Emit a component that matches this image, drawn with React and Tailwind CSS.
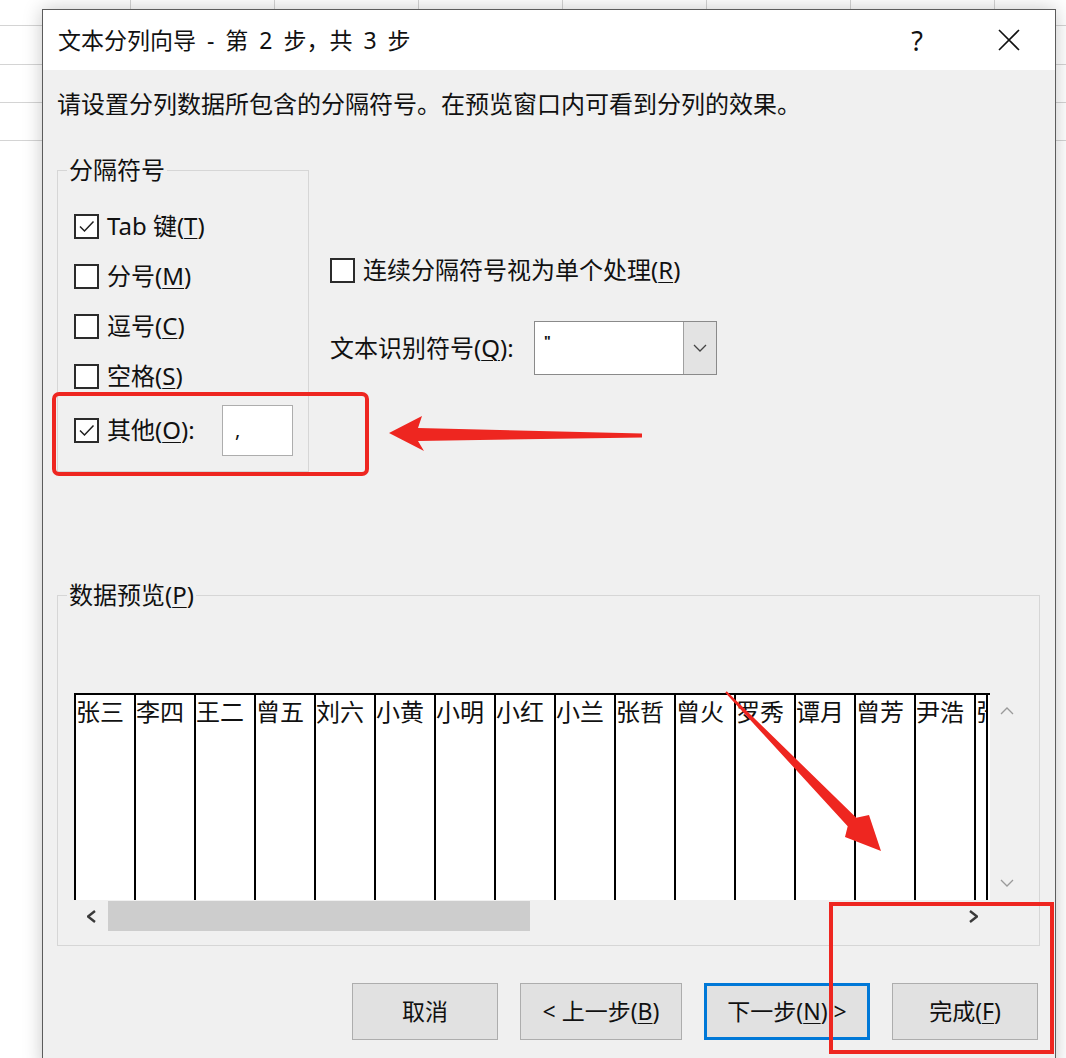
import React from "react";

const delimiters = [
  { label: "Tab 键", key: "T", checked: true },
  { label: "分号", key: "M" },
  { label: "逗号", key: "C" },
  { label: "空格", key: "S" },
];

const names = ["张三", "李四", "王二", "曾五", "刘六", "小黄", "小明", "小红", "小兰", "张哲", "曾火", "罗秀", "谭月", "曾芳", "尹浩"];

const Key = ({ k }) => (
  <>
    (<span className="underline underline-offset-[3px] decoration-1">{k}</span>)
  </>
);

const CheckBox = ({ checked }) => (
  <span className="w-[25px] h-[25px] border-2 border-[#2b2b2b] bg-white shrink-0 flex items-center justify-center">
    {checked && (
      <svg width="19" height="19" viewBox="0 0 19 19">
        <path d="M3 9.5 L7.5 14 L16.5 4.5" fill="none" stroke="#1f1f1f" strokeWidth="1.5" />
      </svg>
    )}
  </span>
);

const Chevron = ({ dir, className, color = "#444", width = 1.4, w = 14, h = 8 }) => {
  const paths = {
    down: `M1 1 L${w / 2} ${h - 1} L${w - 1} 1`,
    up: `M1 ${h - 1} L${w / 2} 1 L${w - 1} ${h - 1}`,
    left: `M${w - 1} 1 L1 ${h / 2} L${w - 1} ${h - 1}`,
    right: `M1 1 L${w - 1} ${h / 2} L1 ${h - 1}`,
  };
  return (
    <svg width={w} height={h} viewBox={`0 0 ${w} ${h}`} className={className}>
      <path d={paths[dir]} fill="none" stroke={color} strokeWidth={width} strokeLinejoin="miter" />
    </svg>
  );
};

const DialogButton = ({ children, primary, width }) => (
  <button
    className={`${width} h-[57px] flex items-center justify-center bg-[#e1e1e1] text-[23px] text-[#111] ${
      primary ? "border-[3px] border-[#0078d7]" : "border border-[#adadad]"
    }`}
  >
    {children}
  </button>
);

export default function App() {
  return (
    <div className="relative w-[1066px] h-[1058px] overflow-hidden bg-white bg-[linear-gradient(to_bottom,transparent_25.5px,#d4d4d4_25.5px,#d4d4d4_26.5px,transparent_26.5px,transparent_64.5px,#d4d4d4_64.5px,#d4d4d4_65.5px,transparent_65.5px,transparent_102.5px,#d4d4d4_102.5px,#d4d4d4_103.5px,transparent_103.5px,transparent_140.5px,#d4d4d4_140.5px,#d4d4d4_141.5px,transparent_141.5px),repeating-linear-gradient(to_right,transparent_0,transparent_130px,#d4d4d4_130px,#d4d4d4_131px,transparent_131px,transparent_144px)] pt-[9px] pl-[42px] font-['Noto_Sans','Noto_Sans_CJK_SC',sans-serif] text-[#111]">
      {/* Dialog window */}
      <div className="w-[1014px] h-[1060px] border border-[#5c5c5c] bg-[#f0f0f0] shadow-[0_0_18px_rgba(0,0,0,0.22)] flex flex-col">
        {/* Title bar */}
        <div className="h-[60px] bg-white flex items-center shrink-0">
          <div className="pl-[15px] text-[23px] leading-none flex-1 [word-spacing:5px]">文本分列向导 - 第 2 步，共 3 步</div>
          <div className="w-[92px] h-full flex items-center justify-center text-[27px] leading-none">?</div>
          <div className="w-[92px] h-full flex items-center justify-center">
            <svg width="22" height="22" viewBox="0 0 22 22">
              <path d="M1 1 L21 21 M21 1 L1 21" stroke="#111" strokeWidth="1.6" />
            </svg>
          </div>
        </div>

        {/* Body */}
        <div className="flex-1 pl-[14px] pr-[17px] pt-[18px]">
          <p className="text-[24px] leading-[32px]">请设置分列数据所包含的分隔符号。在预览窗口内可看到分列的效果。</p>

          {/* Upper row */}
          <div className="flex items-start mt-[36px]">
            <fieldset className="w-[252px] border border-[#d6d6d6]">
              <legend className="ml-[9px] px-[2px] text-[24px] leading-[28px]">分隔符号</legend>
              <div className="flex flex-col pl-[16px] pt-[17px] pb-[12px]">
                {delimiters.map((d) => (
                  <label key={d.key} className="h-[50px] flex items-center gap-[8px] text-[24px]">
                    <CheckBox checked={d.checked} />
                    <span>
                      {d.label}
                      <Key k={d.key} />
                    </span>
                  </label>
                ))}
                <div className="h-[58px] flex items-center text-[24px]">
                  <CheckBox checked />
                  <span className="w-[123px] pl-[8px]">
                    其他<Key k="O" />:
                  </span>
                  <div className="w-[71px] h-[51px] bg-white border border-[#adadad] pl-[12px] pt-[14px] text-[20px] leading-none">,</div>
                </div>
              </div>
            </fieldset>

            <div className="ml-[21px] flex flex-col">
              <label className="mt-[89px] h-[50px] flex items-center gap-[8px] text-[24px]">
                <CheckBox />
                <span>
                  连续分隔符号视为单个处理<Key k="R" />
                </span>
              </label>
              <div className="mt-[26px] h-[54px] flex items-center text-[24px]">
                <span className="w-[204px]">
                  文本识别符号<Key k="Q" />:
                </span>
                <div className="w-[183px] h-[54px] bg-white border border-[#8a8a8a] flex">
                  <div className="flex-1 pl-[9px] pt-[12px] text-[14px] font-bold leading-none">"</div>
                  <div className="w-[33px] h-full bg-[#e3e3e3] border-l border-[#a0a0a0] flex items-center justify-center">
                    <Chevron dir="down" color="#444" width={1.3} />
                  </div>
                </div>
              </div>
            </div>
          </div>

          {/* Data preview */}
          <fieldset className="mt-[109px] w-[981px] border border-[#d6d6d6]">
            <legend className="ml-[9px] px-[2px] text-[24px] leading-[28px]">
              数据预览<Key k="P" />
            </legend>
            <div className="pl-[16px] pr-[15px] pt-[84px] pb-[13px]">
              <div className="flex flex-col">
                <div className="flex h-[207px]">
                  <div className="w-[916px] h-full bg-white border-t-2 border-black flex overflow-hidden">
                    {names.map((n) => (
                      <div key={n} className="w-[60px] shrink-0 h-full border-l-2 border-black text-[24px] leading-[28px] pt-[3px] overflow-hidden whitespace-nowrap">
                        {n}
                      </div>
                    ))}
                    <div className="w-[14px] shrink-0 h-full border-l-2 border-r-2 border-black text-[24px] leading-[28px] pt-[3px] overflow-hidden whitespace-nowrap">
                      张
                    </div>
                  </div>
                  <div className="w-[34px] h-full flex flex-col items-center justify-between pt-[14px] pb-[13px]">
                    <Chevron dir="up" color="#9a9a9a" width={1.3} />
                    <Chevron dir="down" color="#9a9a9a" width={1.3} />
                  </div>
                </div>
                <div className="flex h-[32px] items-center">
                  <div className="w-[34px] h-full flex items-center justify-center">
                    <Chevron dir="left" color="#3a3a3a" width={2.4} w={9} h={13} />
                  </div>
                  <div className="w-[422px] h-[30px] bg-[#cdcdcd]" />
                  <div className="flex-1" />
                  <div className="w-[34px] h-full flex items-center justify-center">
                    <Chevron dir="right" color="#3a3a3a" width={2.4} w={9} h={13} />
                  </div>
                  <div className="w-[34px]" />
                </div>
              </div>
            </div>
          </fieldset>

          {/* Buttons */}
          <div className="mt-[37px] flex justify-end gap-[22px]">
            <DialogButton width="w-[146px]">取消</DialogButton>
            <DialogButton width="w-[162px]">
              &lt; 上一步<Key k="B" />
            </DialogButton>
            <DialogButton width="w-[166px]" primary>
              下一步<Key k="N" />&nbsp;&gt;
            </DialogButton>
            <DialogButton width="w-[146px]">
              完成<Key k="F" />
            </DialogButton>
          </div>
        </div>
      </div>

      {/* Red annotations drawn over the screenshot */}
      <svg className="absolute inset-0 pointer-events-none" width="1066" height="1058" viewBox="0 0 1066 1058">
        <rect x="54" y="394" width="313" height="80" rx="5" fill="none" stroke="#ee2620" strokeWidth="4" />
        <polygon points="389,433 422,416 418,428 642,433.5 642,437.5 418,441 424,451" fill="#ee2620" />
        <polygon points="726.7,691.3 856.3,817.8 869,815 881,851 845,837 847.7,826.2 725.3,692.7" fill="#ee2620" />
        <rect x="831" y="904" width="221" height="148" fill="none" stroke="#ee2620" strokeWidth="4" />
      </svg>
    </div>
  );
}
